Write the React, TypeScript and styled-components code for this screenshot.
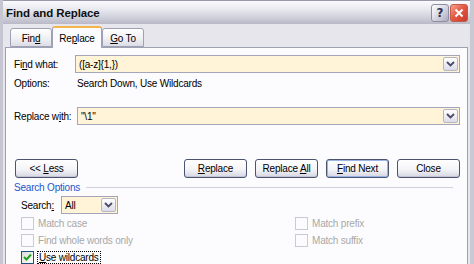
import React from "react";
import styled, { createGlobalStyle } from "styled-components";

const Global = createGlobalStyle`
  html, body { margin: 0; padding: 0; background: #e6e6ec; }
  body { font-family: "Liberation Sans", Arial, sans-serif; font-size: 10px; letter-spacing: -0.2px; color: #000; }
  #root { width: 474px; height: 264px; overflow: hidden; }
`;

const Window = styled.div`
  width: 474px;
  height: 264px;
  box-sizing: border-box;
  overflow: hidden;
  background: #e6e6ec;
  border-left: 3px solid #c6c6d2;
  border-right: 4px solid #c9c9d4;
  display: flex;
  flex-direction: column;
`;

const TitleBar = styled.div`
  height: 24px;
  flex: none;
  box-sizing: border-box;
  border-top: 1px solid #9898a8;
  background: linear-gradient(#fbfbfd 0%, #e6e6ee 40%, #cacad6 80%, #b8b8c6 100%);
  display: flex;
  align-items: center;
  padding: 0 2px 0 3px;
`;

const Title = styled.div`
  flex: 1;
  font-family: "Liberation Sans", Arial, sans-serif;
  font-weight: bold;
  font-size: 11.5px;
  letter-spacing: -0.1px;
  color: #101010;
  margin-top: 1px;
`;

const CapButton = styled.div<{ $red?: boolean }>`
  width: 18px;
  height: 18px;
  box-sizing: border-box;
  border-radius: 3px;
  border: 1px solid ${(p) => (p.$red ? "#c35a4a" : "#8e8ea0")};
  background: ${(p) =>
    p.$red
      ? "linear-gradient(135deg, #f4a48e 0%, #e45b45 45%, #c9382a 100%)"
      : "linear-gradient(135deg, #ffffff 0%, #d8d8e4 50%, #a9a9bc 100%)"};
  color: ${(p) => (p.$red ? "#fff" : "#30304a")};
  display: flex;
  align-items: center;
  justify-content: center;
  font-family: "DejaVu Sans", sans-serif;
  font-weight: bold;
  font-size: 12px;
  margin-left: 1px;
  margin-top: 1px;
`;

const Body = styled.div`
  flex: 1;
  display: flex;
  flex-direction: column;
  padding: 2px 0 0 2px;
  min-height: 0;
`;

const TabRow = styled.div`
  height: 21px;
  display: flex;
  align-items: flex-end;
  padding-left: 5px;
  position: relative;
  z-index: 1;
`;

const Tab = styled.div<{ $active?: boolean; $w: number }>`
  width: ${(p) => p.$w}px;
  box-sizing: border-box;
  height: ${(p) => (p.$active ? 22 : 19)}px;
  margin-bottom: ${(p) => (p.$active ? -1 : 0)}px;
  border: 1px solid #9ea0b4;
  border-bottom: ${(p) => (p.$active ? "none" : "1px solid #9ea0b4")};
  border-top: ${(p) => (p.$active ? "2px solid #f4b44c" : "1px solid #9ea0b4")};
  border-radius: 3px 3px 0 0;
  background: ${(p) =>
    p.$active ? "#fcfcfe" : "linear-gradient(#ffffff 0%, #f2f2f6 50%, #dcdce6 100%)"};
  display: flex;
  align-items: center;
  justify-content: center;
  padding-top: ${(p) => (p.$active ? 0 : 1)}px;
  white-space: pre;
`;

const Panel = styled.div`
  flex: 1;
  margin-right: 2px;
  border: 1px solid #9ea0b4;
  border-bottom: none;
  background: #fcfcfe;
  padding: 7px 7px 0 8px;
  display: flex;
  flex-direction: column;
`;

const FieldRow = styled.div<{ $mt?: number }>`
  display: flex;
  align-items: center;
  height: 18px;
  margin-top: ${(p) => p.$mt ?? 0}px;
`;

const Label = styled.div<{ $w: number }>`
  width: ${(p) => p.$w}px;
  flex: none;
  white-space: pre;
`;

const Combo = styled.div<{ $w?: number }>`
  ${(p) => (p.$w ? `width: ${p.$w}px;` : "flex: 1;")}
  height: 18px;
  box-sizing: border-box;
  border: 1px solid #a4a6b8;
  background: #fff4d8;
  display: flex;
  align-items: center;
`;

const ComboText = styled.div`
  flex: 1;
  padding-left: 3px;
  white-space: pre;
`;

const DropBtn = styled.div`
  width: 15px;
  height: 14px;
  margin-right: 1px;
  box-sizing: border-box;
  border: 1px solid #b4b6c6;
  border-radius: 2px;
  background: linear-gradient(#ffffff, #dcdce8);
  display: flex;
  align-items: center;
  justify-content: center;
`;

const OptionsRow = styled.div`
  display: flex;
  height: 14px;
  align-items: center;
  margin-top: 3px;
`;

const ButtonRow = styled.div`
  display: flex;
  align-items: center;
  margin-top: 34px;
`;

const Button = styled.div<{ $default?: boolean; $first?: boolean }>`
  width: 63px;
  height: 19px;
  box-sizing: border-box;
  border: 1px solid #4a5470;
  border-radius: 3px;
  background: linear-gradient(#ffffff 0%, #f4f4f8 55%, #d6d6e2 100%);
  box-shadow: ${(p) => (p.$default ? "inset 0 0 0 1px #9bb4e6" : "inset 0 -1px 0 #c4c4d2")};
  display: flex;
  align-items: center;
  justify-content: center;
  white-space: pre;
  margin-left: ${(p) => (p.$first ? 1 : 8)}px;
`;

const Spacer = styled.div`
  flex: 1;
`;

const GroupHead = styled.div`
  display: flex;
  align-items: center;
  margin-top: 2px;
  height: 14px;
  color: #1f55c8;
`;

const GroupLine = styled.div`
  flex: 1;
  height: 1px;
  background: #d2d0dc;
  margin: 0 7px 0 6px;
`;

const SearchRow = styled.div`
  display: flex;
  align-items: center;
  margin-top: 2px;
  padding-left: 7px;
  height: 18px;
`;

const CheckGrid = styled.div`
  display: grid;
  grid-template-columns: 274px auto;
  row-gap: 3px;
  padding-left: 7px;
  margin-top: 2px;
`;

const CheckItem = styled.div<{ $disabled?: boolean }>`
  display: flex;
  align-items: center;
  height: 14px;
  white-space: pre;
  color: ${(p) => (p.$disabled ? "#a8a8a8" : "#000")};
`;

const Box = styled.div<{ $disabled?: boolean }>`
  width: 13px;
  height: 13px;
  box-sizing: border-box;
  border: 1px solid ${(p) => (p.$disabled ? "#cacad2" : "#1c5180")};
  background: ${(p) => (p.$disabled ? "#fcfcfe" : "linear-gradient(135deg,#dcdcd6,#ffffff)")};
  margin-right: 4px;
  display: flex;
  align-items: center;
  justify-content: center;
`;

const Focus = styled.span`
  outline: 1px dotted #000;
  padding: 0 1px;
`;

const U = styled.span`
  text-decoration: underline;
`;

const Chevron = () => (
  <svg width="9" height="6" viewBox="0 0 9 6">
    <path d="M1 1 L4.5 4.5 L8 1" fill="none" stroke="#4a4a68" strokeWidth="1.8" />
  </svg>
);

const Check = () => (
  <svg width="9" height="9" viewBox="0 0 9 9">
    <path d="M1 4 L3.5 6.5 L8 1.5" fill="none" stroke="#21a121" strokeWidth="2" />
  </svg>
);

export default function App() {
  return (
    <>
      <Global />
      <Window>
        <TitleBar>
          <Title>Find and Replace</Title>
          <CapButton>?</CapButton>
          <CapButton $red>
            <svg width="10" height="10" viewBox="0 0 10 10">
              <path d="M1.5 1.5 L8.5 8.5 M8.5 1.5 L1.5 8.5" stroke="#fff" strokeWidth="2" />
            </svg>
          </CapButton>
        </TitleBar>
        <Body>
          <TabRow>
            <Tab $w={42}>
              <span>Fin<U>d</U></span>
            </Tab>
            <Tab $w={50} $active>
              <span>Re<U>p</U>lace</span>
            </Tab>
            <Tab $w={42}>
              <span><U>G</U>o To</span>
            </Tab>
          </TabRow>
          <Panel>
            <FieldRow>
              <Label $w={61}>
                <span>Fi<U>n</U>d what:</span>
              </Label>
              <Combo>
                <ComboText>([a-z]{"{"}1,{"}"})</ComboText>
                <DropBtn>
                  <Chevron />
                </DropBtn>
              </Combo>
            </FieldRow>
            <OptionsRow>
              <Label $w={63}>Options:</Label>
              <div>Search Down, Use Wildcards</div>
            </OptionsRow>
            <FieldRow $mt={17}>
              <Label $w={63}>
                <span>Replace w<U>i</U>th:</span>
              </Label>
              <Combo>
                <ComboText>"\1"</ComboText>
                <DropBtn>
                  <Chevron />
                </DropBtn>
              </Combo>
            </FieldRow>
            <ButtonRow>
              <Button $first>
                <span>&lt;&lt; <U>L</U>ess</span>
              </Button>
              <Spacer />
              <Button>
                <span><U>R</U>eplace</span>
              </Button>
              <Button>
                <span>Replace <U>A</U>ll</span>
              </Button>
              <Button $default>
                <span><U>F</U>ind Next</span>
              </Button>
              <Button>Close</Button>
            </ButtonRow>
            <GroupHead>
              Search Options
              <GroupLine />
            </GroupHead>
            <SearchRow>
              <Label $w={40}>
                <span>Search<U>:</U></span>
              </Label>
              <Combo $w={57}>
                <ComboText>All</ComboText>
                <DropBtn>
                  <Chevron />
                </DropBtn>
              </Combo>
            </SearchRow>
            <CheckGrid>
              <CheckItem $disabled>
                <Box $disabled />
                Match case
              </CheckItem>
              <CheckItem $disabled>
                <Box $disabled />
                Match prefix
              </CheckItem>
              <CheckItem $disabled>
                <Box $disabled />
                Find whole words only
              </CheckItem>
              <CheckItem $disabled>
                <Box $disabled />
                Match suffix
              </CheckItem>
              <CheckItem>
                <Box>
                  <Check />
                </Box>
                <Focus>
                  <U>U</U>se wildcards
                </Focus>
              </CheckItem>
            </CheckGrid>
          </Panel>
        </Body>
      </Window>
    </>
  );
}
